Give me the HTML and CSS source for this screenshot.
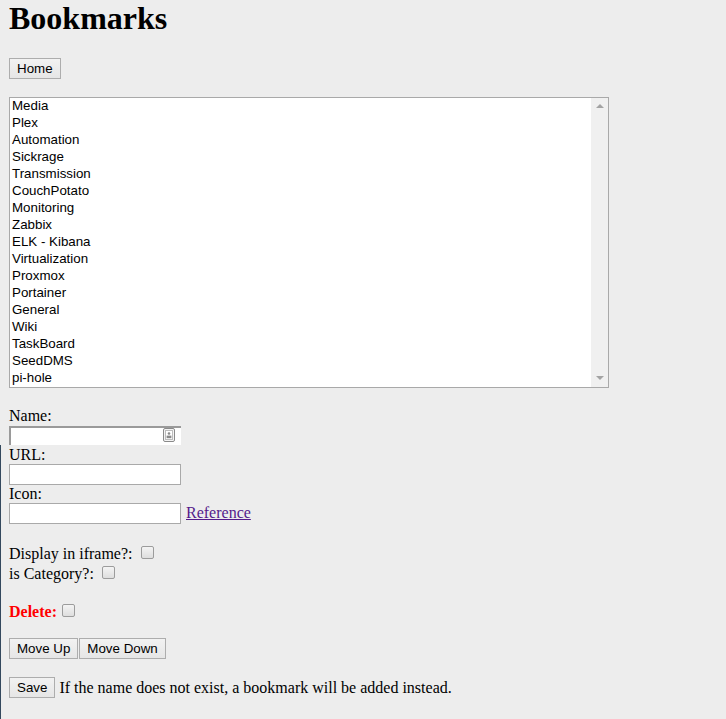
FILE: index.html
```html
<!DOCTYPE html>
<html>
<head>
<meta charset="utf-8">
<title>Bookmarks</title>
<link rel="stylesheet" href="styles.css">
</head>
<body>
<h1 class="title">Bookmarks</h1>
<div class="home-row"><button class="btn" type="button">Home</button></div>
<div class="list">
  <ul class="items">
    <li>Media</li>
    <li>Plex</li>
    <li>Automation</li>
    <li>Sickrage</li>
    <li>Transmission</li>
    <li>CouchPotato</li>
    <li>Monitoring</li>
    <li>Zabbix</li>
    <li>ELK - Kibana</li>
    <li>Virtualization</li>
    <li>Proxmox</li>
    <li>Portainer</li>
    <li>General</li>
    <li>Wiki</li>
    <li>TaskBoard</li>
    <li>SeedDMS</li>
    <li>pi-hole</li>
  </ul>
  <div class="scrollbar"><span class="arrow up"></span><span class="arrow down"></span></div>
</div>
<form class="form">
  <div class="field-label">Name:</div>
  <div class="field-row">
    <div class="name-wrap">
      <input class="name-input" type="text">
      <svg class="autofill" width="12" height="14" viewBox="0 0 12 14"><rect x="0.5" y="0.5" width="11" height="13" rx="1.5" fill="#f4f4f4" stroke="#8a8a8a"/><rect x="2.5" y="2.5" width="7" height="9" fill="#fff" stroke="#bdbdbd"/><circle cx="6" cy="5.5" r="1.3" fill="#8a8a8a"/><rect x="3.6" y="7.6" width="4.8" height="2.6" fill="#8a8a8a"/></svg>
    </div>
  </div>
  <div class="field-label">URL:</div>
  <div class="field-row"><input class="text-input" type="text"></div>
  <div class="field-label">Icon:</div>
  <div class="field-row"><input class="text-input" type="text"> <a class="ref-link" href="#">Reference</a></div>

  <div class="checks">
    <div class="check-row">Display in iframe?: <input class="cb" type="checkbox"></div>
    <div class="check-row">is Category?: <input class="cb" type="checkbox"></div>
  </div>
  <div class="check-row delete-row"><span class="delete-label">Delete:</span> <input class="cb cb-tight" type="checkbox"></div>

  <div class="move-row"><button class="btn" type="button">Move Up</button><button class="btn" type="button">Move Down</button></div>
  <div class="save-row"><button class="btn" type="button">Save</button> If the name does not exist, a bookmark will be added instead.</div>
</form>
<div class="edge-line"></div>
</body>
</html>
```

FILE: styles.css
```css
html, body {
  background: #ededed;
}
body {
  margin: 0 9px;
  font-family: "Liberation Serif", "Times New Roman", serif;
  font-size: 16px;
  color: #000;
}
.title {
  margin: 0 0 22px;
  font-size: 32px;
  line-height: 36px;
  font-weight: bold;
}
.home-row {
  height: 21px;
}
.btn {
  font-family: "Liberation Sans", Arial, sans-serif;
  font-size: 13.33px;
  color: #000;
  height: 21px;
  margin: 0;
  padding: 0 7px;
  border: 1px solid #adadad;
  border-radius: 0;
  background: linear-gradient(#f2f2f2, #e6e6e6);
  box-sizing: border-box;
  line-height: 19px;
  vertical-align: top;
}
.move-row .btn + .btn {
  margin-left: 1px;
}
.list {
  margin-top: 18px;
  width: 600px;
  height: 291px;
  box-sizing: border-box;
  border: 1px solid #a9a9a9;
  background: #fff;
  display: flex;
}
.items {
  flex: 1;
  list-style: none;
  margin: 0;
  padding: 0;
  font-family: "Liberation Sans", Arial, sans-serif;
  font-size: 13.33px;
}
.items li {
  height: 17px;
  box-sizing: border-box;
  line-height: 15px;
  padding: 0 0 2px 2px;
  white-space: nowrap;
}
.scrollbar {
  width: 17px;
  background: #f0f0f0;
  display: flex;
  flex-direction: column;
  justify-content: space-between;
  align-items: center;
  padding: 6px 0 7px;
  box-sizing: border-box;
}
.arrow {
  width: 0;
  height: 0;
  border-left: 4px solid transparent;
  border-right: 4px solid transparent;
}
.arrow.up {
  border-bottom: 4px solid #a3a3a3;
}
.arrow.down {
  border-top: 4px solid #a3a3a3;
}
.form {
  margin: 19px 0 0;
}
.field-label {
  height: 18px;
  line-height: 18px;
}
.field-row {
  height: 21px;
  line-height: 21px;
  display: flex;
  align-items: flex-start;
  gap: 5px;
}
.name-wrap {
  position: relative;
  width: 172px;
  height: 19px;
}
.name-input {
  width: 172px;
  height: 19px;
  box-sizing: border-box;
  margin: 0;
  padding: 0 2px;
  border-style: solid;
  border-width: 2px 0 0 2px;
  border-color: #9a9a9a;
  background: #fff;
  outline: none;
}
.autofill {
  position: absolute;
  left: 154px;
  top: 3px;
}
.text-input {
  width: 172px;
  height: 21px;
  box-sizing: border-box;
  margin: 0;
  padding: 0 2px;
  border: 1px solid #a9a9a9;
  background: #fff;
  outline: none;
}
.ref-link {
  color: #551a8b;
  text-decoration: underline;
  line-height: 21px;
  position: relative;
  top: -1px;
}
.checks {
  margin-top: 20px;
}
.check-row {
  height: 20px;
  line-height: 20px;
}
.delete-row {
  margin-top: 18px;
}
.delete-label {
  color: #ff0000;
  font-weight: bold;
}
.cb {
  -webkit-appearance: none;
  appearance: none;
  width: 13px;
  height: 13px;
  margin: 0 0 0 4px;
  border: 1px solid #9c9c9c;
  border-radius: 2px;
  background: linear-gradient(#f4f4f4, #dedede);
  box-sizing: border-box;
  vertical-align: baseline;
}
.cb-tight {
  margin-left: 1px;
}
.move-row {
  margin-top: 16px;
  height: 21px;
}
.save-row {
  margin-top: 18px;
  height: 21px;
  line-height: 21px;
}
.edge-line {
  position: fixed;
  left: 0;
  top: 445px;
  bottom: 0;
  width: 1px;
  background: #34495e;
}
```
